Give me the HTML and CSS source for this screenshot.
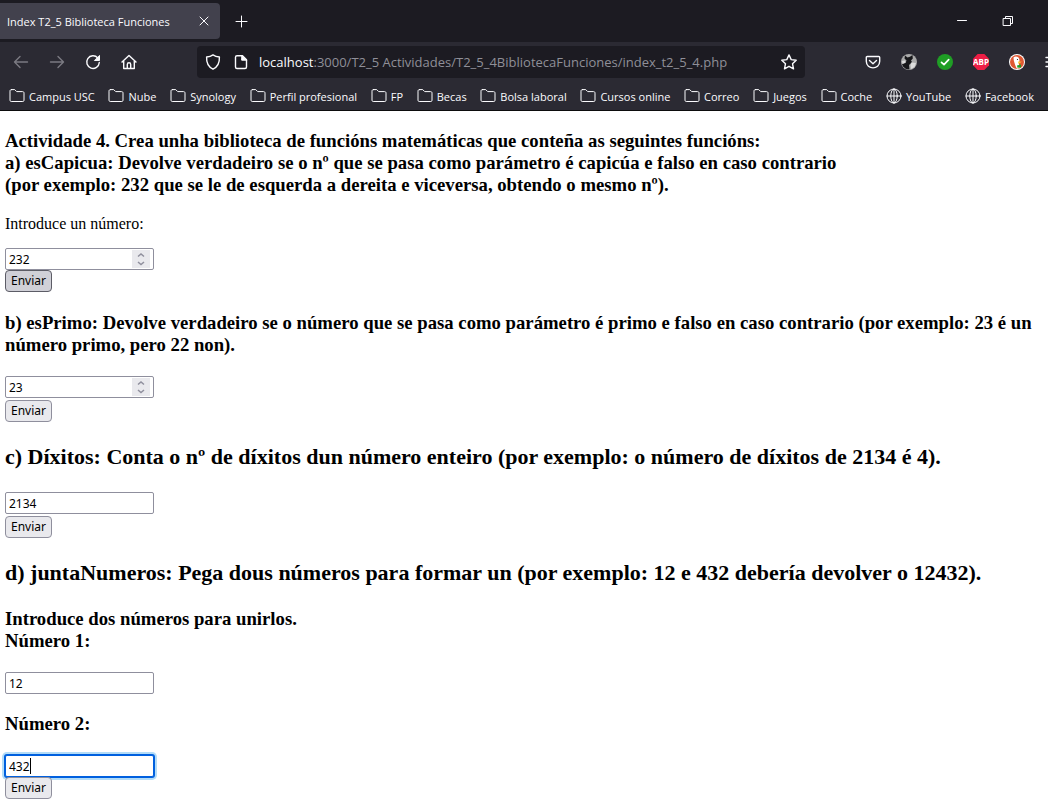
FILE: index.html
```html
<!DOCTYPE html>
<html lang="gl">
<head>
<meta charset="utf-8">
<meta name="viewport" content="width=device-width, initial-scale=1">
<title>Index T2_5 Biblioteca Funciones</title>
<link rel="stylesheet" href="styles.css">
</head>
<body>
<svg class="symbols" aria-hidden="true">
  <symbol id="folder" viewBox="0 0 16 16"><path d="M2.500 1.600h3.200l2 2h5.800c1 0 1.500.5 1.500 1.500v7.200c0 .8-.5 1.200-1.200 1.200H2.200C1.500 13.500 1 13 1 12.300V3.100c0-1 .5-1.500 1.500-1.500z"/></symbol>
  <symbol id="globe" viewBox="0 0 16 16"><circle cx="8" cy="8" r="7"/><ellipse cx="8" cy="8" rx="3.200" ry="7"/><path d="M1 8h14M8 1v14"/></symbol>
</svg>
<header class="browser">
  <div class="tabs">
    <div class="tab"><span class="tab-title">Index T2_5 Biblioteca Funciones</span>
      <button class="icon-button" type="button" aria-label="Pechar"><svg class="icon" viewBox="0 0 16 16"><path d="M4 4l8 8M12 4l-8 8"/></svg></button>
    </div>
    <button class="icon-button" type="button" aria-label="Nova lapela"><svg class="icon" viewBox="0 0 16 16"><path d="M8.500 3v11M3 8.500h11"/></svg></button>
    <div class="window-buttons">
      <button class="icon-button" type="button" aria-label="Minimizar"><svg class="icon" viewBox="0 0 16 16"><path d="M3.500 7.500h9"/></svg></button>
      <button class="icon-button" type="button" aria-label="Restaurar"><svg class="icon" viewBox="0 0 16 16"><path d="M3.500 5.500h7v7h-7zM5.500 5.500v-2h7v7h-2"/></svg></button>
    </div>
  </div>
  <div class="toolbar">
    <div class="navigation">
      <button class="icon-button dim" type="button" aria-label="Atrás"><svg class="icon" viewBox="0 0 16 16"><path class="bold" d="M14.500 8H1.500M7 2.500L1.500 8 7 13.500"/></svg></button>
      <button class="icon-button dim" type="button" aria-label="Adiante"><svg class="icon" viewBox="0 0 16 16"><path class="bold" d="M1.500 8h13M9 2.500L14.500 8 9 13.500"/></svg></button>
      <button class="icon-button" type="button" aria-label="Recargar"><svg class="icon" viewBox="0 0 16 16"><path class="bold" d="M12.800 4A6.300 6.300 0 1 0 14.300 8.500"/><path class="solid" d="M14.500 1.800v4.700H9.800z"/></svg></button>
      <button class="icon-button" type="button" aria-label="Inicio"><svg class="icon" viewBox="0 0 16 16"><path class="bold" d="M1 8l7-6.500L15 8M2.700 7v7.500h10.600V7M6.300 14v-3.500a1.700 1.700 0 0 1 3.400 0V14"/></svg></button>
    </div>
    <div class="address">
      <svg class="icon" viewBox="0 0 16 16"><path class="bold" d="M8 .9c2 1.500 4 2 6.400 2.100.3 5.500-1.600 9.800-6.400 12.200C3.200 12.800 1.300 8.500 1.600 3 4 2.900 6 2.400 8 .9z"/></svg>
      <svg class="icon" viewBox="0 0 16 16"><path class="bold" d="M4 1.700h5.500l4 4v7.300c0 1-.5 1.500-1.500 1.500H4c-1 0-1.500-.5-1.500-1.500V3.200c0-1 .5-1.500 1.500-1.500z"/><path class="solid" d="M9 1.500l4.700 4.700H9z"/></svg>
      <span class="url"><span class="host">localhost</span>:3000/T2_5 Actividades/T2_5_4BibliotecaFunciones/index_t2_5_4.php</span>
      <button class="icon-button" type="button" aria-label="Marcador"><svg class="icon" viewBox="0 0 16 16"><path class="bold" d="M8 .9l2.200 4.700 5 .6-3.700 3.500 1 5.100L8 12.300l-4.500 2.500 1-5.100L.8 6.200l5-.6z"/></svg></button>
    </div>
    <div class="extensions">
      <svg class="icon" viewBox="0 0 16 16"><path class="bold" d="M2.300 2.500h11.400c.7 0 1 .4 1 1v3.800c0 8.700-13.400 8.700-13.400 0V3.500c0-.6.3-1 1-1zM4.500 6.500L8 9.700l3.500-3.200"/></svg>
      <svg class="icon" viewBox="0 0 16 16"><circle class="fill-grey" cx="8" cy="8" r="8"/><path class="fill-dark" d="M4 1.500l2.500 2 2.500-.8 2.500-1.700.3 3.500-1.800 2 1 1.500-3 3 .5 4.500-3.500-.5-3-2.500-1-2.500 3.500-1L5.500 6.500 3.500 4.500z"/><path class="fill-light" d="M10.500 8.500l4.500.5-1.500 4-3.500 2-.5-4zM1 7l3-.5.5 2-3 1.500z"/></svg>
      <svg class="icon" viewBox="0 0 16 16"><circle class="fill-green" cx="8" cy="8" r="8"/><path class="check" d="M4.500 8.300L7 10.700l4.700-5"/></svg>
      <svg class="icon" viewBox="0 0 16 16"><path class="fill-red" d="M4.700 0h6.600L16 4.700v6.600L11.300 16H4.700L0 11.300V4.700z"/><text class="abp" x="8" y="11">ABP</text></svg>
      <svg class="icon" viewBox="0 0 16 16"><circle class="fill-white" cx="8" cy="8" r="8"/><circle class="fill-orange" cx="8" cy="8" r="7"/><path class="fill-white" d="M4.500 3.500C7 1.500 10.500 3 10.500 6.500l-.7 3 .7 4.500-2.500.8C6.500 12.500 5.500 9 4.800 6.500z"/><path class="fill-yellow" d="M8.800 7.500l4 .3-3.300 2z"/><path class="fill-green" d="M8 11.500l4-1v3l-3.500.3z"/><circle class="fill-dark" cx="8.500" cy="5.500" r=".6"/></svg>
      <svg class="icon" viewBox="0 0 16 16"><path class="bold" d="M1 3.500h14M1 8h14M1 12.500h14"/></svg>
    </div>
  </div>
  <nav class="bookmarks">
    <a href="#"><svg class="icon"><use href="#folder"/></svg>Campus USC</a>
    <a href="#"><svg class="icon"><use href="#folder"/></svg>Nube</a>
    <a href="#"><svg class="icon"><use href="#folder"/></svg>Synology</a>
    <a href="#"><svg class="icon"><use href="#folder"/></svg>Perfil profesional</a>
    <a href="#"><svg class="icon"><use href="#folder"/></svg>FP</a>
    <a href="#"><svg class="icon"><use href="#folder"/></svg>Becas</a>
    <a href="#"><svg class="icon"><use href="#folder"/></svg>Bolsa laboral</a>
    <a href="#"><svg class="icon"><use href="#folder"/></svg>Cursos online</a>
    <a href="#"><svg class="icon"><use href="#folder"/></svg>Correo</a>
    <a href="#"><svg class="icon"><use href="#folder"/></svg>Juegos</a>
    <a href="#"><svg class="icon"><use href="#folder"/></svg>Coche</a>
    <a href="#"><svg class="icon"><use href="#globe"/></svg>YouTube</a>
    <a href="#"><svg class="icon"><use href="#globe"/></svg>Facebook</a>
  </nav>
</header>
<main class="page">
  <form class="exercise">
    <h3>Actividade 4. Crea unha biblioteca de funcións matemáticas que conteña as seguintes funcións:<br>a) esCapicua: Devolve verdadeiro se o nº que se pasa como parámetro é capicúa e falso en caso contrario<br>(por exemplo: 232 que se le de esquerda a dereita e viceversa, obtendo o mesmo nº).</h3>
    <label class="prompt" for="capicua">Introduce un número:</label>
    <div class="field"><input class="box" id="capicua" type="text" inputmode="numeric" value="232"><span class="spinner"><svg viewBox="0 0 18 18"><path d="M6 6.500L9 4l3 2.500M6 12l3 2.500L12 12"/></svg></span></div>
    <button class="send pressed" type="button">Enviar</button>
  </form>
  <form class="exercise spaced">
    <h3><label for="primo">b) esPrimo: Devolve verdadeiro se o número que se pasa como parámetro é primo e falso en caso contrario (por exemplo: 23 é un número primo, pero 22 non).</label></h3>
    <div class="field"><input class="box" id="primo" type="text" inputmode="numeric" value="23"><span class="spinner"><svg viewBox="0 0 18 18"><path d="M6 6.500L9 4l3 2.500M6 12l3 2.500L12 12"/></svg></span></div>
    <button class="send" type="button">Enviar</button>
  </form>
  <form class="exercise spaced">
    <h2><label for="dixitos">c) Díxitos: Conta o nº de díxitos dun número enteiro (por exemplo: o número de díxitos de 2134 é 4).</label></h2>
    <div class="field"><input class="box" id="dixitos" type="text" value="2134"></div>
    <button class="send" type="button">Enviar</button>
  </form>
  <form class="exercise">
    <h2>d) juntaNumeros: Pega dous números para formar un (por exemplo: 12 e 432 debería devolver o 12432).</h2>
    <h3>Introduce dos números para unirlos.<br><label for="numero1">Número 1:</label></h3>
    <div class="field"><input class="box" id="numero1" type="text" value="12"></div>
    <h3 class="second"><label for="numero2">Número 2:</label></h3>
    <div class="field"><input class="box focused" id="numero2" type="text" value="432"><span class="caret"></span></div>
    <button class="send" type="button">Enviar</button>
  </form>
</main>
</body>
</html>
```
FILE: styles.css
```css
* { box-sizing: border-box; }
body { margin: 0; background: #fff; color: #000; font-family: "Liberation Serif", serif; overflow-x: hidden; }
button, input { font: inherit; color: inherit; }
.symbols { position: absolute; width: 0; height: 0; }

.browser { background: #2b2a33; color: #fbfbfe; font-family: "Open Sans", sans-serif; font-size: 11px; border-bottom: 1px solid #0c0c0d; overflow: hidden; }
.icon { width: 16px; height: 16px; flex: none; display: block; fill: none; stroke: currentColor; stroke-width: 1; stroke-linejoin: round; stroke-linecap: round; }
.icon .bold { stroke-width: 1.4; }
.icon .solid { fill: currentColor; }
.icon-button { display: block; padding: 0; border: 0; background: none; }
.dim { color: #7b7a82; }

.tabs { display: flex; align-items: center; height: 42px; background: #1c1b22; }
.tab { display: flex; align-items: center; justify-content: space-between; width: 220px; height: 36px; margin-right: 13px; padding: 0 8px 0 7px; border-radius: 0 4px 4px 0; background: #42414d; }
.window-buttons { display: flex; gap: 30px; margin-left: auto; padding-right: 32px; }

.toolbar { display: flex; align-items: center; height: 40px; }
.navigation { display: flex; gap: 20px; padding-left: 13px; }
.address { display: flex; align-items: center; gap: 12px; flex: 1; height: 32px; margin: 0 60px; padding: 0 8px; border-radius: 4px; background: #1c1b22; }
.url { flex: 1; color: #8f8f98; font-size: 13px; white-space: nowrap; margin-left: -2px; }
.host { color: #fbfbfe; }
.extensions { display: flex; gap: 20px; margin-right: -13px; }
.fill-grey { fill: #aaa; stroke: none; }
.fill-dark { fill: #17171a; stroke: none; }
.fill-light { fill: #ddd; stroke: none; }
.fill-green { fill: #1f9e25; stroke: none; }
.fill-red { fill: #ed1e45; stroke: none; }
.fill-white { fill: #fff; stroke: none; }
.fill-orange { fill: #de5833; stroke: none; }
.fill-yellow { fill: #fc3; stroke: none; }
.check { stroke: #fff; stroke-width: 1.7; }
.abp { fill: #fff; stroke: none; font-size: 8px; font-weight: 700; text-anchor: middle; }

.bookmarks { display: flex; align-items: center; justify-content: space-between; height: 28px; padding: 0 14px 0 9px; white-space: nowrap; }
.bookmarks a { display: flex; align-items: center; gap: 4px; color: inherit; text-decoration: none; }

.page { padding: 19px 5px 5px; }
h2, h3 { margin: 0; }
h3 { line-height: 22px; }
h2 { font-size: 22px; line-height: 26px; }
.exercise { display: flex; flex-direction: column; align-items: flex-start; margin-bottom: 20px; }
.exercise h2 { margin-top: 2px; }
.prompt { font-size: 16px; line-height: 18px; margin: 19px 0 15px; }
.field { position: relative; width: 149px; }
h3 + .field { margin-top: 20px; }
h2 + .field, h2 + h3 { margin-top: 22px; }
.second { margin-top: 19px; }
.spaced .send { margin-top: 2px; }
.box { display: block; width: 100%; height: 22px; padding: 0 3px; border: 1px solid #8f8f9d; border-radius: 2px; background: #fff; font-family: "Noto Sans", sans-serif; font-size: 12px; }
.focused { border-color: #0060df; box-shadow: 0 0 0 1px #0060df, 0 0 0 3px #b3dcf8; }
.caret { position: absolute; left: 25px; top: 3px; width: 1px; height: 16px; background: #000; }
.spinner { position: absolute; right: 4px; top: 2px; width: 18px; height: 18px; background: #e9e9ed; }
.spinner svg { display: block; fill: none; stroke: #8f8f9d; stroke-width: 1.5; }
.send { position: relative; height: 22px; padding: 0 5px; border: 1px solid #8f8f9d; border-radius: 4px; background: #e9e9ed; font-family: "Noto Sans", sans-serif; font-size: 12px; line-height: 20px; }
.pressed { background: #d0d0d7; border-color: #5c5c66; }
```
